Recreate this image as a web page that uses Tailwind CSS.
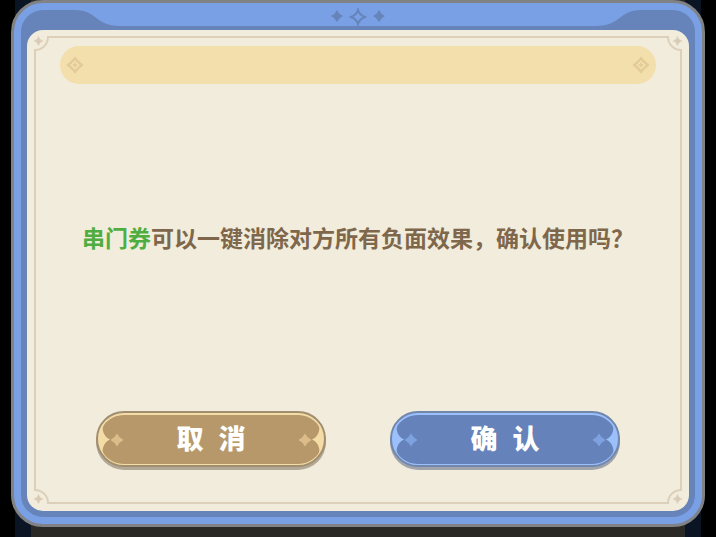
<!DOCTYPE html>
<html lang="zh-CN">
  <head>
    <meta charset="UTF-8" />
    <meta name="viewport" content="width=device-width, initial-scale=1.0" />
    <title>使用确认</title>
    <script src="https://cdn.jsdelivr.net/npm/@tailwindcss/browser@4"></script>
  </head>
  <body class="bg-black font-['Liberation_Sans','Noto_Sans_CJK_SC',sans-serif]">
    <!-- Shared shapes -->
    <svg class="hidden">
      <symbol id="star" viewBox="0 0 12 12">
        <path d="M6 0Q7.800 4.200 12 6Q7.800 7.800 6 12Q4.200 7.800 0 6Q4.200 4.200 6 0Z" fill="currentColor" />
      </symbol>
      <symbol id="spark" viewBox="0 0 14 14">
        <path d="M7 0.500Q8.800 4.500 13.500 7Q8.800 9.500 7 13.500Q5.200 9.500 0.500 7Q5.200 4.500 7 0.500Z" fill="currentColor" />
      </symbol>
      <symbol id="corner" viewBox="0 0 16 16">
        <path d="M0 0H14A14 14 0 0 1 0 14Z" fill="#f2ecdc" />
        <path d="M14 0V1A13 13 0 0 1 1 14H0" fill="none" stroke="#ddd0ba" stroke-width="2" />
        <path d="M4.500 0.500Q5.300 4.200 9 5Q5.300 5.800 4.500 9.500Q3.700 5.800 0 5Q3.700 4.200 4.500 0.500Z" fill="#d9cbb5" stroke="#d9cbb5" stroke-width=".6" />
      </symbol>
      <symbol id="gem" viewBox="0 0 18 18">
        <path d="M9 2Q10.500 4.500 12 5.500Q13.500 7.500 16 9Q13.500 10.500 12 12.500Q10.500 13.500 9 16Q7.500 13.500 6 12.500Q4.500 10.500 2 9Q4.500 7.500 6 5.500Q7.500 4.500 9 2Z" fill="none" stroke="currentColor" stroke-width="2.400" stroke-linejoin="round" />
        <path d="M9 6Q9.500 8.500 12 9Q9.500 9.500 9 12Q8.500 9.500 6 9Q8.500 8.500 9 6Z" fill="currentColor" />
      </symbol>
      <symbol id="face" viewBox="0 0 115 56">
        <path d="M115 4H28C20 4 12 8 8 14C6.500 16 6.500 18 7 20C8 24 10 26.500 14 28.500C10 30.500 8 33 7 37C6.500 39 6.500 41 8 43C12 49 20 53 28 53H115Z" fill="currentColor" />
      </symbol>
      <symbol id="notch" viewBox="0 0 45 16">
        <path d="M0 0C22 0 20 16 45 16V0Z" fill="currentColor" />
      </symbol>
    </svg>

    <div class="min-h-screen px-[15px] bg-black">
      <div class="min-h-screen bg-[#0b1422] px-4">
        <div class="min-h-screen bg-[#2b2926]">
          <!-- Dialog -->
          <main
            role="dialog"
            aria-labelledby="message"
            class="-mx-5 rounded-[32px] border-[3px] border-[#818286] bg-[#799fe5] p-[7px]"
          >
            <div class="relative rounded-[22px] bg-[#6684b9] px-1.5 pb-1.5">
              <header class="flex h-5 items-start px-12 text-[#799fe5]">
                <svg class="h-4 w-[45px]"><use href="#notch" /></svg>
                <div class="flex h-4 flex-1 items-start justify-center gap-1.5 bg-[#799fe5] text-[#6684b9]">
                  <svg class="size-3"><use href="#star" /></svg>
                  <svg class="-mt-0.5 size-[18px]" viewBox="0 0 18 18">
                    <path d="M9 2Q10.500 7 16 9Q10.500 11 9 16Q7.500 11 2 9Q7.500 7 9 2Z" fill="none" stroke="currentColor" stroke-width="2" />
                  </svg>
                  <svg class="size-3"><use href="#star" /></svg>
                </div>
                <svg class="h-4 w-[45px] -scale-x-100"><use href="#notch" /></svg>
              </header>

              <section class="relative flex flex-col rounded-2xl bg-[#f2ecdc] px-[33px] pt-4 pb-11">
                <!-- Frame line with cut corners -->
                <div class="pointer-events-none absolute inset-x-[7px] top-1.5 bottom-[7px] border-2 border-[#ddd0ba]">
                  <svg class="absolute -top-0.5 -left-0.5 size-4"><use href="#corner" /></svg>
                  <svg class="absolute -top-0.5 -right-0.5 size-4 -scale-x-100"><use href="#corner" /></svg>
                  <svg class="absolute -bottom-0.5 -left-0.5 size-4 -scale-y-100"><use href="#corner" /></svg>
                  <svg class="absolute -right-0.5 -bottom-0.5 size-4 -scale-100"><use href="#corner" /></svg>
                </div>

                <div class="flex h-[38px] items-center justify-between rounded-full bg-[#f3dfac] px-1.5 text-[#e3cb96]">
                  <svg class="size-[18px]"><use href="#gem" /></svg>
                  <svg class="size-[18px]"><use href="#gem" /></svg>
                </div>

                <p id="message" class="flex h-[327px] items-center justify-center pb-4 text-[23px] font-bold text-[#7e674a]">
                  <span class="text-[#4fae3f]">串门券</span>可以一键消除对方所有负面效果，确认使用吗？
                </p>

                <div class="flex justify-center gap-16">
                  <button type="button" class="relative h-14 w-[230px] rounded-full border-2 border-[#a18d70] bg-[#f3dca5] pt-0.5 text-[27px] font-black text-white shadow-[0_3px_0_#b1a895]">
                    <svg class="absolute -top-0.5 -left-0.5 h-14 w-[115px] text-[#b7986b]"><use href="#face" /></svg>
                    <svg class="absolute -top-0.5 -right-0.5 h-14 w-[115px] -scale-x-100 text-[#b7986b]"><use href="#face" /></svg>
                    <svg class="absolute top-5 left-3 size-3.5 text-[#dcbd8a]"><use href="#spark" /></svg>
                    <svg class="absolute top-5 right-3 size-3.5 text-[#dcbd8a]"><use href="#spark" /></svg>
                    <span class="relative">取&nbsp;&nbsp;消</span>
                  </button>
                  <button type="button" class="relative h-14 w-[230px] rounded-full border-2 border-[#7187ac] bg-[#9bc0fb] pt-0.5 text-[27px] font-black text-white shadow-[0_3px_0_#a0a4ab]">
                    <svg class="absolute -top-0.5 -left-0.5 h-14 w-[115px] text-[#6583ba]"><use href="#face" /></svg>
                    <svg class="absolute -top-0.5 -right-0.5 h-14 w-[115px] -scale-x-100 text-[#6583ba]"><use href="#face" /></svg>
                    <svg class="absolute top-5 left-3 size-3.5 text-[#7ea2e0]"><use href="#spark" /></svg>
                    <svg class="absolute top-5 right-3 size-3.5 text-[#7ea2e0]"><use href="#spark" /></svg>
                    <span class="relative">确&nbsp;&nbsp;认</span>
                  </button>
                </div>
              </section>
            </div>
          </main>
        </div>
      </div>
    </div>
  </body>
</html>
